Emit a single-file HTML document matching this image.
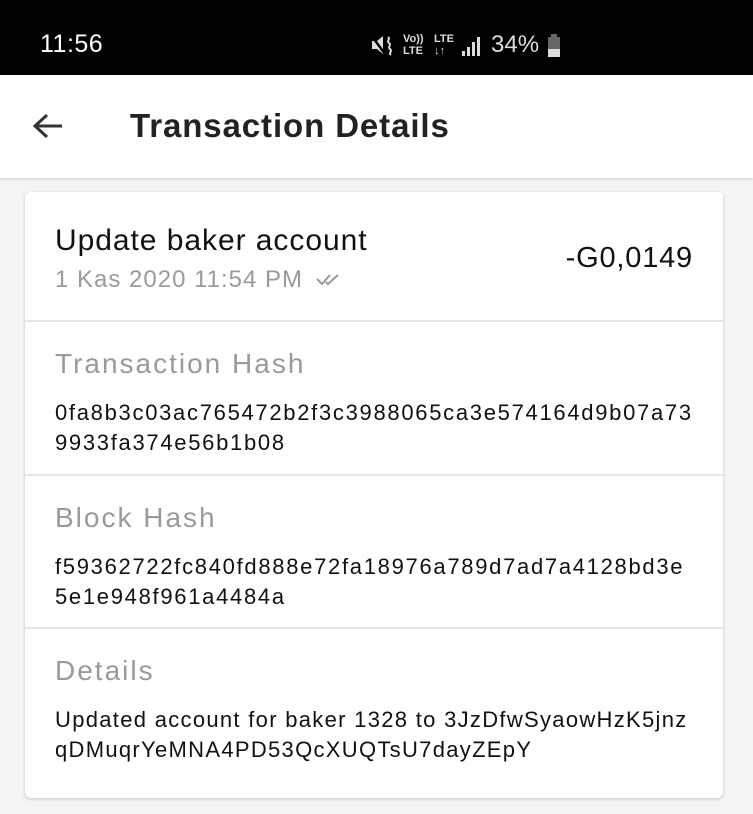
<!DOCTYPE html>
<html><head><meta charset="utf-8"><style>
body{margin:0;width:753px;height:814px;background:#f4f4f4;font-family:"Liberation Sans",sans-serif;overflow:hidden;position:relative}
.sb{position:absolute;top:0;left:0;width:753px;height:75px;background:#000;color:#fff}
.hd{position:absolute;top:75px;left:0;width:753px;height:103px;background:#fff;box-shadow:0 1px 3px rgba(0,0,0,.15)}
.card{position:absolute;left:25px;top:192px;width:698px;height:606px;background:#fff;border-radius:6px;box-shadow:0 1px 3px rgba(0,0,0,.2)}
.sec{position:absolute;left:0;width:698px;border-top:2px solid #e6e6e6}
.lab{position:absolute;left:30px;font-size:28px;color:#9a9a9a;letter-spacing:2px}
.val{position:absolute;left:30px;font-size:22px;color:#111;line-height:30px;letter-spacing:1.7px;white-space:nowrap}
</style></head><body>
<div class="sb">
<div style="position:absolute;left:40px;top:30px;font-size:25px;letter-spacing:0.5px">11:56</div>
<svg style="position:absolute;left:370px;top:34px" width="24" height="22"><path d="M2 7h5l6-5v18l-6-5H2z" fill="#ddd"/><path d="M1 1L15 20" stroke="#000" stroke-width="2.5"/><path d="M18 3c3 2-2 4 1 6s-2 4 1 6-2 4 1 6" stroke="#ddd" stroke-width="2" fill="none"/></svg>
<div style="position:absolute;left:403px;top:33px;font-size:11px;line-height:12px;font-weight:bold;color:#ddd">Vo))<br>LTE</div>
<div style="position:absolute;left:434px;top:33px;font-size:11px;line-height:12px;font-weight:bold;color:#ddd">LTE<br>↓↑</div>
<svg style="position:absolute;left:462px;top:35px" width="20" height="22"><rect x="0" y="16" width="3" height="5" fill="#ddd"/><rect x="5" y="12" width="3" height="9" fill="#ddd"/><rect x="10" y="7" width="3" height="14" fill="#ddd"/><rect x="15" y="2" width="3" height="19" fill="#ddd"/></svg>
<div style="position:absolute;left:491px;top:31px;font-size:24px;color:#ddd">34%</div>
<svg style="position:absolute;left:547px;top:34px" width="14" height="24"><rect x="4" y="0" width="6" height="3" fill="#666"/><rect x="1" y="3" width="12" height="20" fill="#666"/><rect x="1" y="15" width="12" height="8" fill="#ddd"/></svg>
</div>
<div class="hd">
<svg style="position:absolute;left:32px;top:38px" width="32" height="28"><path d="M30 13H4M15 2L3 13L15 24" stroke="#333" stroke-width="3" fill="none"/></svg>
<div style="position:absolute;left:130px;top:32px;font-size:33px;font-weight:bold;color:#222;letter-spacing:0.9px">Transaction Details</div>
</div>
<div class="card">
<div style="position:absolute;left:30px;top:32px;font-size:30px;color:#111;letter-spacing:0.95px">Update baker account</div>
<div style="position:absolute;left:30px;top:74px;font-size:24px;color:#9a9a9a;letter-spacing:1px">1 Kas 2020 11:54 PM</div>
<svg style="position:absolute;left:290px;top:80px" width="30" height="16"><path d="M2 7l5 5 8-9M11 10l2 2 10-9" stroke="#9a9a9a" stroke-width="2" fill="none"/></svg>
<div style="position:absolute;right:30px;top:50px;font-size:29px;color:#111;letter-spacing:0.8px">-G0,0149</div>
<div class="sec" style="top:128px;height:154px">
<div class="lab" style="top:26px">Transaction Hash</div>
<div class="val" style="top:76px">0fa8b3c03ac765472b2f3c3988065ca3e574164d9b07a73<br>9933fa374e56b1b08</div>
</div>
<div class="sec" style="top:282px;height:152px">
<div class="lab" style="top:26px">Block Hash</div>
<div class="val" style="top:76px">f59362722fc840fd888e72fa18976a789d7ad7a4128bd3e<br>5e1e948f961a4484a</div>
</div>
<div class="sec" style="top:435px;height:170px">
<div class="lab" style="top:26px">Details</div>
<div class="val" style="top:76px;letter-spacing:1.3px">Updated account for baker 1328 to 3JzDfwSyaowHzK5jnz<br>qDMuqrYeMNA4PD53QcXUQTsU7dayZEpY</div>
</div>
</div>
</body></html>
